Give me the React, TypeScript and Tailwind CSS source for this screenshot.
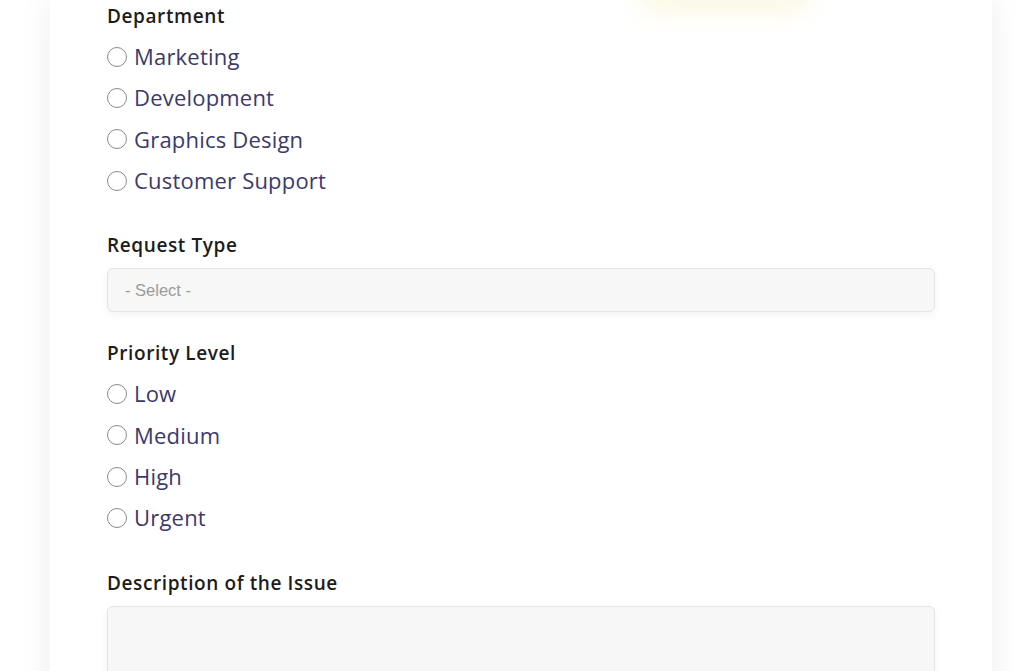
import React from "react"

const departments = ["Marketing", "Development", "Graphics Design", "Customer Support"]
const priorities = ["Low", "Medium", "High", "Urgent"]

function Label({ children }: { children: React.ReactNode }) {
  return (
    <div className="text-[19px] leading-[28px] font-semibold tracking-[0.6px] text-[#1c1c1c]">{children}</div>
  )
}

function RadioGroup({ name, options }: { name: string; options: string[] }) {
  return (
    <div className="mt-[6px] flex flex-col">
      {options.map((opt) => (
        <label key={opt} className="flex h-[41.33px] items-center gap-[7px] cursor-pointer">
          <span className="h-[20px] w-[20px] shrink-0 rounded-full border border-[#8a8a8a] bg-white" />
          <input type="radio" name={name} className="hidden" />
          <span className="text-[22px] tracking-[0.2px] text-[#3b3a6a]">{opt}</span>
        </label>
      ))}
    </div>
  )
}

export default function App() {
  return (
    <div className="relative h-[671px] overflow-hidden bg-white font-['Open_Sans','Noto_Sans',sans-serif]">
      <div className="ml-[50px] mr-[32px] h-[760px] bg-white px-[57px] pt-[2px] shadow-[0_0_32px_rgba(0,0,0,0.07)]">
        {/* faint glow of an element above */}
        <div className="pointer-events-none absolute -top-[14px] left-[640px] h-[24px] w-[170px] rounded-full bg-[#fbf7df] blur-md" />

        <Label>Department</Label>
        <RadioGroup name="department" options={departments} />

        <div className="mt-[30px]">
          <Label>Request Type</Label>
          <div className="mt-[9px] flex h-[44px] items-center rounded-[6px] border border-[#e4e4e4] bg-[#f7f7f7] px-[17px] shadow-[0_3px_8px_rgba(0,0,0,0.05)]">
            <span className="font-['Liberation_Sans',sans-serif] text-[16.5px] text-[#9b9b9b]">- Select -</span>
          </div>
        </div>

        <div className="mt-[27px]">
          <Label>Priority Level</Label>
          <RadioGroup name="priority" options={priorities} />
        </div>

        <div className="mt-[30px]">
          <Label>Description of the Issue</Label>
          <div className="mt-[9px] h-[140px] rounded-[6px] border border-[#e4e4e4] bg-[#f7f7f7] shadow-[0_3px_8px_rgba(0,0,0,0.05)]" />
        </div>
      </div>
    </div>
  )
}
